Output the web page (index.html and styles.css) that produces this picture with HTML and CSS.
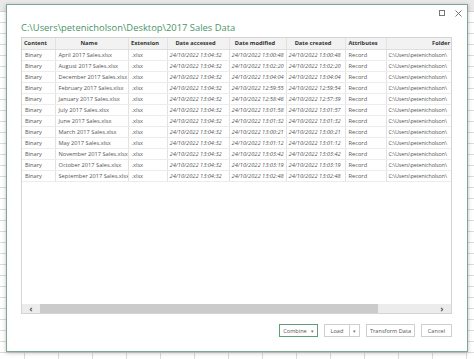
FILE: index.html
```html
<!doctype html>
<html lang="en">
<head>
  <meta charset="UTF-8" />
  <title>Navigator - 2017 Sales Data</title>
  <link rel="stylesheet" href="styles.css">
</head>
<body>
  <div class="sheet">
    <div class="sheet-top"></div>
  </div>

  <section class="dialog">
    <div class="window-bar">
      <span class="win-btn max"></span>
      <span class="win-btn close">
        <svg width="7" height="7" viewBox="0 0 7 7"><path d="M0.5 0.5 L6.5 6.5 M6.5 0.5 L0.5 6.5" stroke="#666" stroke-width="0.9" fill="none"/></svg>
      </span>
    </div>

    <h1 class="title">C:\Users\petenicholson\Desktop\2017 Sales Data</h1>

    <div class="grid-wrap">
      <div class="grid-area">
        <table class="grid">
          <colgroup>
            <col style="width:33px"><col style="width:73px"><col style="width:39px"><col style="width:62px">
            <col style="width:57px"><col style="width:59px"><col style="width:41px"><col style="width:65px">
          </colgroup>
          <thead>
            <tr>
              <th class="left">Content</th>
              <th>Name</th>
              <th>Extension</th>
              <th>Date accessed</th>
              <th>Date modified</th>
              <th>Date created</th>
              <th>Attributes</th>
              <th class="right">Folder</th>
            </tr>
          </thead>
          <tbody id="rows"></tbody>
        </table>
      </div>
      <div class="hscroll">
        <span class="arrow">&#8249;</span>
        <span class="thumb"></span>
        <span class="track"></span>
        <span class="arrow">&#8250;</span>
      </div>
    </div>

    <div class="actions">
      <button class="btn primary">Combine <span class="caret">&#9662;</span></button>
      <div class="split">
        <button class="btn">Load</button>
        <button class="btn drop"><span class="caret">&#9662;</span></button>
      </div>
      <button class="btn">Transform Data</button>
      <button class="btn">Cancel</button>
    </div>
  </section>

  <script>
    const files = [
      ["April", "13:00:48", "13:00:48"],
      ["August", "13:02:20", "13:02:20"],
      ["December", "13:04:04", "13:04:04"],
      ["February", "12:59:55", "12:59:54"],
      ["January", "12:58:46", "12:57:39"],
      ["July", "13:01:58", "13:01:57"],
      ["June", "13:01:32", "13:01:32"],
      ["March", "13:00:21", "13:00:21"],
      ["May", "13:01:12", "13:01:12"],
      ["November", "13:03:42", "13:03:42"],
      ["October", "13:03:19", "13:03:19"],
      ["September", "13:02:48", "13:02:48"]
    ];

    const rows = document.getElementById("rows");
    const day = "24/10/2022 ";

    files.forEach(([month, modified, created]) => {
      const tr = document.createElement("tr");
      tr.innerHTML = `
        <td>Binary</td>
        <td>${month} 2017 Sales.xlsx</td>
        <td>.xlsx</td>
        <td class="date">${day}13:04:32</td>
        <td class="date">${day}${modified}</td>
        <td class="date">${day}${created}</td>
        <td>Record</td>
        <td class="folder">C:\\Users\\petenicholson\\</td>
      `;
      rows.appendChild(tr);
    });
  </script>
</body>
</html>
```

FILE: styles.css
```css
* { box-sizing: border-box; }

html, body {
  margin: 0;
  width: 474px;
  height: 359px;
  overflow: hidden;
}

body {
  font-family: "Open Sans", "Noto Sans", sans-serif;
  color: #444;
  background: #fff;
  position: relative;
}

.sheet {
  height: 100%;
  background:
    repeating-linear-gradient(to bottom, transparent 0 10px, #d9dcdb 10px 11px),
    repeating-linear-gradient(to right, transparent 0 24px, #d9dcdb 24px 25px, transparent 25px 34px);
  background-position: 0 12px, 0 0;
}

.sheet-top {
  height: 12px;
  background: #e9e9e9;
  border-bottom: 1px solid #d2d2d2;
}

.dialog {
  position: absolute;
  left: 6px;
  top: 4px;
  width: 462px;
  height: 348px;
  background: #fff;
  border: 1px solid #7ea792;
  box-shadow: 0 1px 4px rgba(0,0,0,.25);
  padding: 0 15px 0 14px;
  display: flex;
  flex-direction: column;
}

.window-bar {
  height: 14px;
  display: flex;
  justify-content: flex-end;
  align-items: center;
  gap: 10px;
  margin-right: -10px;
  padding-top: 2px;
}

.win-btn {
  width: 7px;
  height: 7px;
  display: flex;
}

.win-btn.max {
  width: 6px;
  height: 6px;
  border: 1px solid #777;
}

.title {
  margin: 0;
  height: 18px;
  line-height: 18px;
  font-size: 9.4px;
  font-weight: 400;
  color: #4b9467;
  white-space: nowrap;
}

.grid-wrap {
  height: 277px;
  border: 1px solid #d4d4d4;
  display: flex;
  flex-direction: column;
}

.grid-area {
  flex: 1;
  overflow: hidden;
}

.grid {
  border-collapse: collapse;
  table-layout: fixed;
  width: 429px;
  font-size: 5.7px;
}

.grid th,
.grid td {
  height: 11px;
  padding: 0 2px;
  white-space: nowrap;
  overflow: hidden;
  border-right: 1px solid #e2e2e2;
  border-bottom: 1px solid #ececec;
}

.grid th {
  background: #f2f2f2;
  color: #333;
  font-weight: 700;
  text-align: center;
  padding-right: 7px;
  border-bottom-color: #dedede;
}

.grid th.left { text-align: left; padding-right: 2px; }
.grid th.right { text-align: right; padding-right: 1px; }

.grid td { color: #555; padding-left: 3px; }
.grid td.date { font-style: italic; padding-left: 2px; }
.grid td.folder { padding: 0 0 0 2px; font-size: 5.4px; letter-spacing: -0.1px; }

.grid tr > :last-child { border-right: 0; }

.hscroll {
  height: 9px;
  display: flex;
  background: #ececec;
}

.arrow {
  width: 18px;
  display: flex;
  align-items: center;
  justify-content: center;
  font-size: 9px;
  font-weight: 700;
  line-height: 9px;
  color: #555;
}

.thumb {
  width: 338px;
  background: #cbcbcb;
}

.track { flex: 1; }

.actions {
  display: flex;
  justify-content: flex-end;
  align-items: center;
  gap: 6px;
  margin-top: 10px;
}

.btn {
  height: 13px;
  padding: 0 4px;
  font: inherit;
  font-size: 5.6px;
  color: #555;
  background: #fff;
  border: 1px solid #cfcfcf;
  display: flex;
  align-items: center;
  gap: 4px;
  white-space: nowrap;
}

.btn.primary {
  width: 39px;
  justify-content: center;
  border-color: #5f9d7c;
}

.split { display: flex; }
.split .btn:first-child { width: 26px; justify-content: center; }
.split .drop { width: 10px; padding: 0; justify-content: center; border-left: 0; }

.caret { font-size: 4.5px; color: #777; }

.actions > .btn:nth-last-child(2) { width: 49px; justify-content: center; }
.actions > .btn:last-child { width: 31px; justify-content: center; }
```
